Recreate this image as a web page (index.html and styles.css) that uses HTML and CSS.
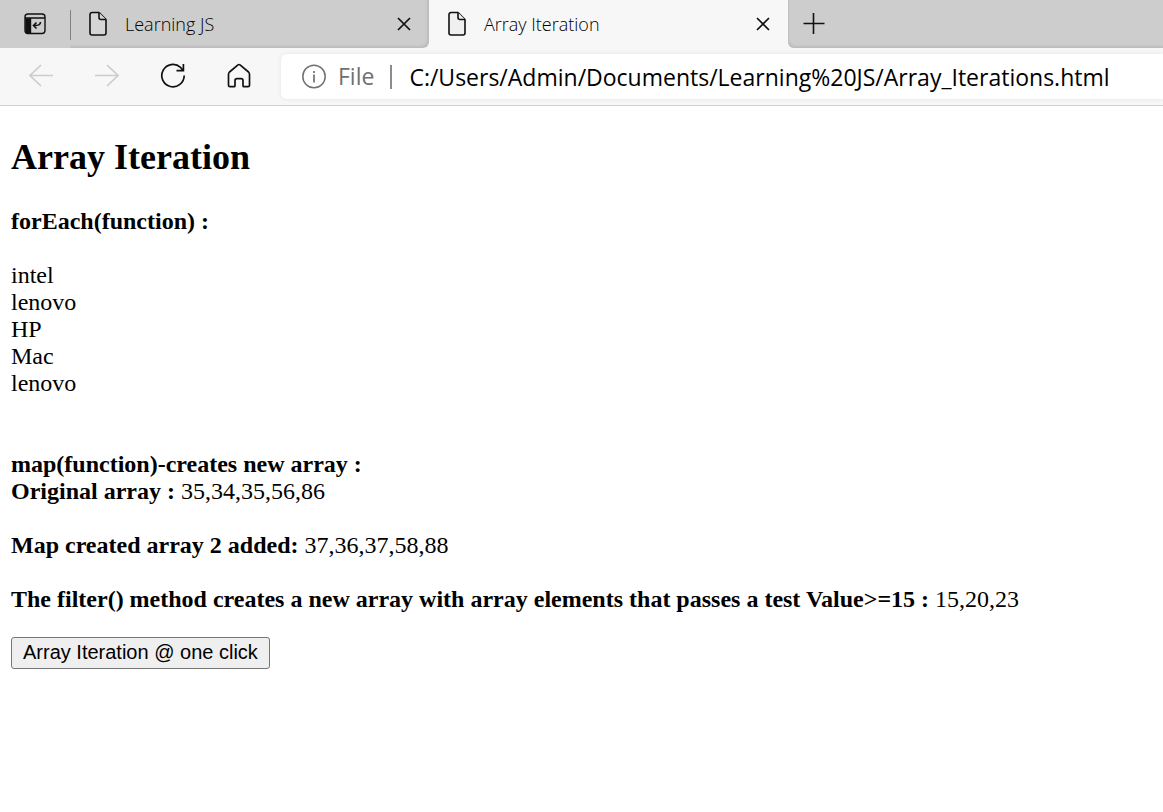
FILE: index.html
```html
<!DOCTYPE html>
<html lang="en">
<head>
<meta charset="utf-8">
<title>Array Iteration</title>
<link rel="stylesheet" href="styles.css">
</head>
<body>
<header class="browser">
  <div class="tab-strip">
    <button class="tab-actions" aria-label="Tab actions">
      <svg class="icon" width="24" height="24" viewBox="0 0 24 24" fill="none" stroke="#111" stroke-width="1.4"><rect x="2" y="2" width="20" height="19.500" rx="3"/><path d="M2 6h20M7.500 6v15"/><path d="M3 7h4v14H4l-1-2z" fill="#111"/><path d="M17.500 10c0 3-2 3.500-7 3.500M13.500 10.500L10.500 13.500l3 3" stroke-width="1.600"/></svg>
    </button>
    <div class="tab tab-first">
      <svg class="icon" width="20" height="26" viewBox="0 0 20 26" fill="#d5d5d5" stroke="#111" stroke-width="1.600" stroke-linejoin="round"><path d="M4 1.500h7l7 7v13.500a2 2 0 0 1-2 2H4a2 2 0 0 1-2-2V3.500a2 2 0 0 1 2-2z"/><path d="M11 1.500v5a2 2 0 0 0 2 2h5"/></svg>
      <span class="tab-title">Learning JS</span>
      <button class="close" aria-label="Close Learning JS"><svg class="icon" width="14" height="14" viewBox="0 0 14 14" stroke="#111" stroke-width="1.700"><path d="M1 1l12 12M13 1L1 13"/></svg></button>
    </div>
    <div class="tab tab-active">
      <svg class="icon" width="20" height="26" viewBox="0 0 20 26" fill="#f0f0f0" stroke="#111" stroke-width="1.600" stroke-linejoin="round"><path d="M4 1.500h7l7 7v13.500a2 2 0 0 1-2 2H4a2 2 0 0 1-2-2V3.500a2 2 0 0 1 2-2z"/><path d="M11 1.500v5a2 2 0 0 0 2 2h5"/></svg>
      <span class="tab-title">Array Iteration</span>
      <button class="close" aria-label="Close Array Iteration"><svg class="icon" width="14" height="14" viewBox="0 0 14 14" stroke="#111" stroke-width="1.700"><path d="M1 1l12 12M13 1L1 13"/></svg></button>
    </div>
    <div class="strip-rest">
      <button class="new-tab" aria-label="New tab"><svg class="icon" width="22" height="22" viewBox="0 0 22 22" stroke="#111" stroke-width="1.600"><path d="M0.500 10.500h21M10.500 0v21"/></svg></button>
    </div>
  </div>
  <div class="toolbar">
    <nav class="nav-buttons">
      <button aria-label="Back" disabled><svg class="icon" width="26" height="24" viewBox="0 0 26 24" fill="none" stroke="#ccc" stroke-width="1.700"><path d="M25 11.500H2M13 1L2 11.500 13 22"/></svg></button>
      <button aria-label="Forward" disabled><svg class="icon" width="26" height="24" viewBox="0 0 26 24" fill="none" stroke="#ccc" stroke-width="1.700"><path d="M1 11.500h23M13 1l11 10.500L13 22"/></svg></button>
      <button aria-label="Refresh"><svg class="icon" width="26" height="26" viewBox="0 0 26 26" fill="none" stroke="#111" stroke-width="1.700"><path d="M24.200 12.600A11.200 11.200 0 1 1 20.500 4.300l2.700 3.400M16.500 7.700h6.900V1"/></svg></button>
      <button aria-label="Home"><svg class="icon" width="24" height="26" viewBox="0 0 24 26" fill="none" stroke="#111" stroke-width="1.700" stroke-linejoin="round"><path d="M1.500 11.500Q1.500 10 2.500 9L11 1.900q1-.8 2 0l8.500 7.100q1 1 1 2.500v10.700q0 1.500-1.500 1.500h-4q-1 0-1-1v-5q0-2-2-2h-4q-2 0-2 2v5q0 1-1 1h-4q-1.500 0-1.500-1.500z"/></svg></button>
    </nav>
    <div class="address">
      <svg class="icon" width="26" height="26" viewBox="0 0 26 26" fill="none" stroke="#707070" stroke-width="1.500"><circle cx="13" cy="12.500" r="11.200"/><path d="M13 10.500v8M13 7v2" stroke-width="1.700"/></svg>
      <label class="scheme" for="url">File</label>
      <input class="url" id="url" type="text" value="C:/Users/Admin/Documents/Learning%20JS/Array_Iterations.html">
    </div>
  </div>
</header>
<main class="page">
  <h2 class="heading">Array Iteration</h2>
  <b>forEach(function) :</b>
  <p class="items">intel<br>lenovo<br>HP<br>Mac<br>lenovo</p>
  <p class="result"><b>map(function)-creates new array :</b><br><b>Original array :</b> 35,34,35,56,86</p>
  <p class="result"><b>Map created array 2 added:</b> 37,36,37,58,88</p>
  <p class="result"><b>The filter() method creates a new array with array elements that passes a test Value&gt;=15 :</b> 15,20,23</p>
  <button class="run">Array Iteration @ one click</button>
</main>
</body>
</html>
```
FILE: styles.css
```css
* { box-sizing: border-box; }
body {
  margin: 0;
  background: #fff;
  color: #000;
  font: 24px/27px "Liberation Serif", serif;
}
.browser { font-family: "Open Sans", "Noto Sans", sans-serif; }
.browser button {
  display: flex;
  align-items: center;
  justify-content: center;
  padding: 0;
  border: 0;
  background: none;
}
.icon { display: block; flex: none; }
.tab-strip {
  display: flex;
  height: 48px;
  background: #f7f7f7;
}
.browser .tab-actions {
  width: 70px;
  background: #cdcdcd;
}
.tab {
  display: flex;
  flex: 0 1 359px;
  align-items: center;
  gap: 17px;
  min-width: 0;
  padding: 0 18px;
  font-size: 18px;
  font-weight: 300;
}
.tab-first {
  background: linear-gradient(#808080, #808080) 0 10px / 1px 30px no-repeat #cdcdcd;
  border-radius: 0 0 6px 0;
  box-shadow: inset -2px -2px 2px #bdbdbd;
}
.tab-active {
  background: #f7f7f7;
  border-radius: 6px 6px 0 0;
}
.tab-title { flex: 1; overflow: hidden; white-space: nowrap; }
.strip-rest {
  display: flex;
  flex: 1;
  padding-left: 15px;
  background: #cdcdcd;
  border-radius: 0 0 0 6px;
  box-shadow: inset 1px -2px 2px #bdbdbd;
}
.toolbar {
  display: flex;
  height: 58px;
  padding-top: 6px;
  background: #f7f7f7;
  border-bottom: 1px solid #d0d0d0;
}
.nav-buttons {
  display: flex;
  flex: none;
  padding: 0 9px 0 8px;
}
.nav-buttons button { width: 66px; height: 44px; }
.address {
  display: flex;
  flex: 1;
  align-items: center;
  min-width: 0;
  height: 45px;
  padding-left: 20px;
  background: #fff;
  border-radius: 6px 0 0 6px;
  box-shadow: 0 0 5px #e4e4e4;
  font-size: 23px;
}
.scheme {
  margin: 0 16px 0 11px;
  color: #707070;
}
.url {
  flex: 1;
  min-width: 0;
  height: 34px;
  padding: 0 0 0 19px;
  border: 0;
  background: linear-gradient(#8c8c8c, #8c8c8c) 0 50% / 2px 24px no-repeat;
  color: #000;
  font: inherit;
  outline: 0;
}
.page { padding: 30px 11px; }
.heading {
  margin: 0 0 30px;
  font-size: 36px;
  line-height: 42px;
}
.items { margin: 27px 0 54px; }
.result { margin: 27px 0; }
.run {
  display: block;
  height: 32px;
  margin-top: -3px;
  padding: 0 11px 2px;
  border: 1px solid #767676;
  border-radius: 3px;
  background: #efefef;
  color: #000;
  font: 20px "Liberation Sans", Arial, sans-serif;
}
```
